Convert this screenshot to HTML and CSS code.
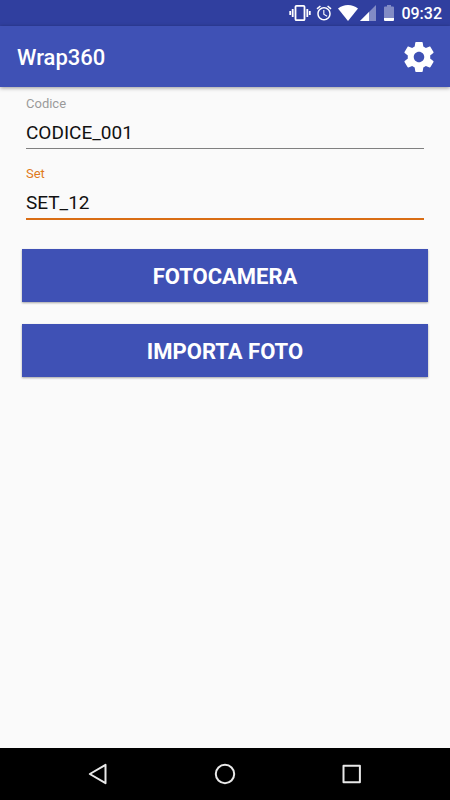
FILE: index.html
```html
<!DOCTYPE html>
<html lang="it">

<head>
    <meta charset="UTF-8">
    <meta name="viewport" content="width=device-width, initial-scale=1.0">
    <title>Wrap360</title>
    <link rel="stylesheet" href="styles.css">
</head>

<body>
    <div class="statusbar">
        <svg class="vibrate" width="22" height="18" viewBox="0 0 22 18">
            <rect x="6.5" y="1.8" width="9" height="14.4" rx="1" fill="none" stroke="#fff" stroke-width="1.8"/>
            <path d="M1.200 7v4M3.700 5v8M18.300 5v8M20.800 7v4" stroke="#fff" stroke-width="1.800"/>
        </svg>
        <svg class="alarm" width="18" height="18" viewBox="0 0 24 24" fill="#fff">
            <path d="M22 5.720l-4.600-3.860-1.290 1.530 4.600 3.860L22 5.720zM7.880 3.390L6.600 1.860 2 5.710l1.290 1.530 4.590-3.850zM12.500 8H11v6l4.750 2.850.75-1.230-4-2.370V8zM12 4c-4.970 0-9 4.030-9 9s4.020 9 9 9c4.970 0 9-4.030 9-9s-4.030-9-9-9zm0 16c-3.870 0-7-3.130-7-7s3.130-7 7-7 7 3.130 7 7-3.130 7-7 7z"/>
        </svg>
        <svg class="wifi" width="20" height="16" viewBox="0 0 20 16">
            <path d="M10 16L0 3.600C2.800 1.300 6.300 0 10 0s7.200 1.300 10 3.600z" fill="#fff"/>
        </svg>
        <svg class="signal" width="16" height="16" viewBox="0 0 16 16">
            <path d="M0 16L16 0v16z" fill="#fff" opacity=".4"/>
            <path d="M0 16L9 7v9z" fill="#fff"/>
        </svg>
        <svg class="battery" width="10" height="16" viewBox="0 0 10 16">
            <path d="M0 2.500q0-1 1-1h2V0h4v1.500h2q1 0 1 1V13H0z" fill="#fff" opacity=".4"/>
            <path d="M0 13h10v2q0 1-1 1H1q-1 0-1-1z" fill="#fff"/>
        </svg>
        <span class="time">09:32</span>
    </div>

    <header class="toolbar">
        <h1>Wrap360</h1>
        <button type="button" class="settings" aria-label="Impostazioni">
            <svg width="36" height="36" viewBox="0 0 24 24" fill="#fff">
                <path d="M19.430 12.980c.04-.32.07-.64.07-.98s-.03-.66-.07-.98l2.110-1.650c.19-.15.24-.42.12-.64l-2-3.460c-.12-.22-.39-.3-.61-.22l-2.490 1c-.52-.4-1.080-.73-1.690-.98l-.38-2.650C14.460 2.180 14.250 2 14 2h-4c-.25 0-.46.18-.49.42l-.38 2.650c-.61.25-1.170.59-1.690.98l-2.490-1c-.23-.09-.49 0-.61.22l-2 3.460c-.13.22-.07.49.12.64l2.110 1.650c-.04.32-.07.65-.07.98s.03.66.07.98l-2.110 1.650c-.19.15-.24.42-.12.64l2 3.460c.12.22.39.3.61.22l2.490-1c.52.4 1.080.73 1.690.98l.38 2.650c.03.24.24.42.49.42h4c.25 0 .46-.18.49-.42l.38-2.650c.61-.25 1.170-.59 1.690-.98l2.490 1c.23.09.49 0 .61-.22l2-3.460c.12-.22.07-.49-.12-.64l-2.110-1.650zM12 15.500c-1.930 0-3.500-1.570-3.500-3.500s1.570-3.500 3.500-3.500 3.500 1.570 3.500 3.500-1.570 3.500-3.500 3.500z"/>
            </svg>
        </button>
    </header>

    <main class="content">
        <div class="field">
            <label for="codice">Codice</label>
            <input type="text" id="codice" value="CODICE_001">
        </div>
        <div class="field active">
            <label for="set">Set</label>
            <input type="text" id="set" value="SET_12">
        </div>
        <div class="buttons">
            <button type="button" class="btn">FOTOCAMERA</button>
            <button type="button" class="btn">IMPORTA FOTO</button>
        </div>
    </main>

    <nav class="navbar">
        <button type="button" aria-label="Indietro">
            <svg width="22" height="22" viewBox="0 0 22 22">
                <path d="M18.500 1.800v18.400L2.800 11z" fill="none" stroke="#e8e8e8" stroke-width="2" stroke-linejoin="round"/>
            </svg>
        </button>
        <button type="button" aria-label="Home">
            <svg width="22" height="22" viewBox="0 0 22 22">
                <circle cx="11" cy="11" r="9.200" fill="none" stroke="#e8e8e8" stroke-width="2"/>
            </svg>
        </button>
        <button type="button" aria-label="Recenti">
            <svg width="22" height="22" viewBox="0 0 22 22">
                <rect x="2.500" y="2.800" width="16.400" height="16.400" fill="none" stroke="#e8e8e8" stroke-width="2" stroke-linejoin="round"/>
            </svg>
        </button>
    </nav>
</body>

</html>
```
FILE: styles.css
```css
* {
    margin: 0;
    padding: 0;
    box-sizing: border-box;
}

body {
    display: flex;
    flex-direction: column;
    min-height: 100vh;
    background-color: #fafafa;
    font-family: Roboto, "Liberation Sans", sans-serif;
}

button {
    border: none;
    background: none;
    font-family: inherit;
    cursor: pointer;
}

svg {
    display: block;
}

.statusbar {
    display: flex;
    justify-content: flex-end;
    align-items: center;
    height: 26px;
    padding-right: 8px;
    background-color: #303f9f;
    color: #fff;
}

.alarm {
    margin-left: 4px;
}

.wifi {
    margin-left: 5px;
}

.signal {
    margin-left: 2px;
}

.battery {
    margin-left: 8px;
}

.time {
    margin-left: 7px;
    padding-top: 2px;
    font-size: 16px;
    font-weight: 500;
    line-height: 24px;
}

.toolbar {
    display: flex;
    justify-content: space-between;
    align-items: center;
    height: 61px;
    padding: 0 13px 0 17px;
    background-color: #3f51b5;
    box-shadow: 0 1px 4px rgba(0, 0, 0, .4);
    color: #fff;
}

.toolbar h1 {
    padding-top: 2px;
    font-size: 22px;
    font-weight: 500;
}

.content {
    flex: 1;
    padding: 8px 22px;
}

.field {
    margin: 0 4px 16px;
}

.field label {
    display: block;
    font-size: 13px;
    line-height: 18px;
    color: #9a9a9a;
}

.field input {
    display: block;
    width: 100%;
    height: 36px;
    padding-top: 4px;
    border: none;
    border-bottom: 1px solid #808080;
    outline: none;
    background: none;
    font-family: inherit;
    font-size: 19px;
    color: #111;
}

.active label {
    color: #e07a1c;
}

.active input {
    height: 37px;
    border-bottom: 2px solid #d96d14;
}

.buttons {
    display: flex;
    flex-direction: column;
    gap: 22px;
    padding-top: 13px;
}

.btn {
    height: 53px;
    padding-top: 2px;
    background-color: #3f51b5;
    box-shadow: 0 1px 2px rgba(0, 0, 0, .35);
    font-size: 22px;
    font-weight: 700;
    color: #fff;
}

.navbar {
    display: flex;
    justify-content: center;
    align-items: center;
    gap: 105px;
    height: 52px;
    background-color: #000;
}
```
